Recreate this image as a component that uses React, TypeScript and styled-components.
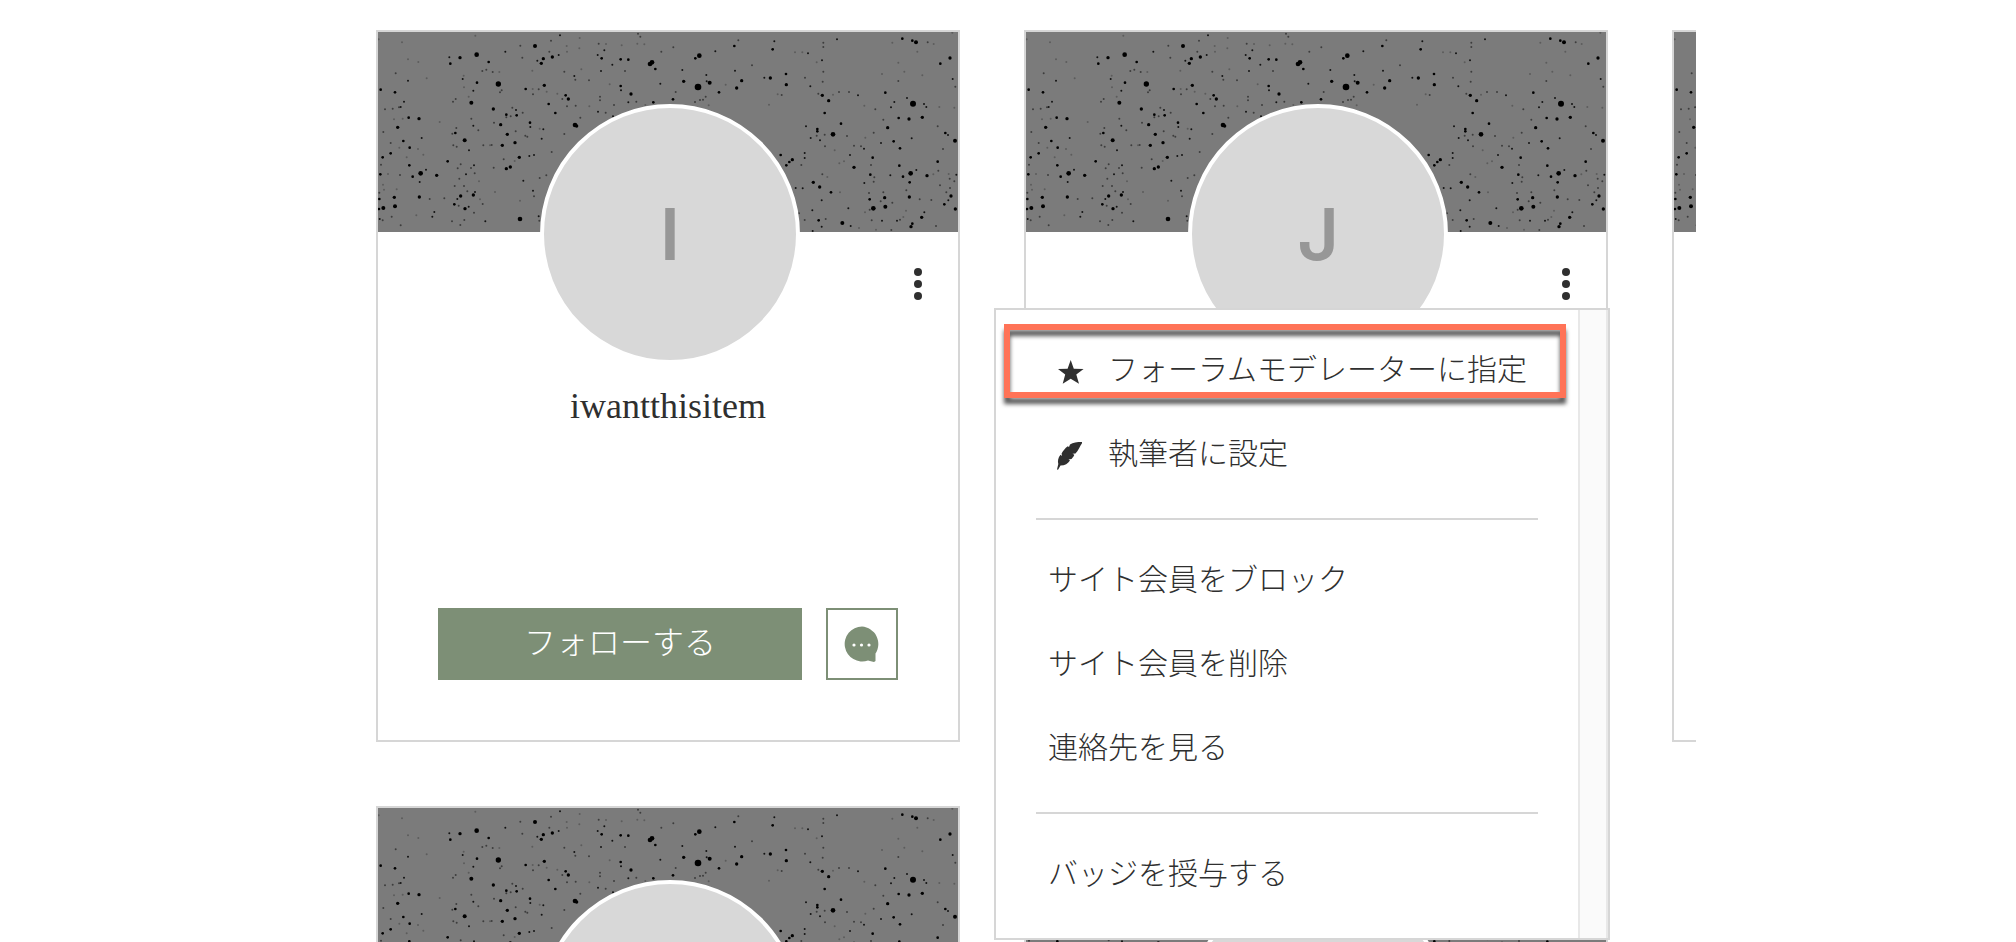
import React from "react";
import styled, { createGlobalStyle } from "styled-components";

const GlobalStyle = createGlobalStyle`
  * { box-sizing: border-box; }
  body {
    margin: 0;
    background: #ffffff;
    color: #2f2f2f;
    font-family: "Liberation Serif", "Noto Sans CJK JP", serif;
    overflow: hidden;
  }
`;

const line = "#d6d6d6";
const green = "#7d8f76";

const Page = styled.main`
  width: 100%;
  max-width: 1376px;
  height: 100vh;
  margin: 0 auto;
  padding: 30px 0 0 56px;
  overflow: hidden;
`;

const Grid = styled.ul`
  display: grid;
  grid-template-columns: repeat(3, 584px);
  grid-auto-rows: 712px;
  gap: 64px;
  margin: 0;
  padding: 0;
  list-style: none;
`;

const Card = styled.li`
  position: relative;
  display: flex;
  flex-direction: column;
  border: 2px solid ${line};
  background: #ffffff;
`;

const Cover = styled.div`
  position: relative;
  flex: none;
  height: 200px;
  padding: 72px 158px 0 162px;
  background: #7b7b7b;
`;

const Speckles = styled.svg`
  position: absolute;
  inset: 0;
  width: 100%;
  height: 100%;
`;

const Avatar = styled.div`
  position: relative;
  display: flex;
  align-items: center;
  justify-content: center;
  height: 260px;
  border: 4px solid #ffffff;
  border-radius: 50%;
  background: #d8d8d8;
  color: #979797;
  font: 600 72px/80px Inter, sans-serif;
`;

const CardBody = styled.div`
  flex: 1;
  display: flex;
  flex-direction: column;
  padding: 32px 32px 60px;
`;

const MoreButton = styled.button`
  align-self: flex-end;
  width: 16px;
  height: 40px;
  padding: 0;
  border: 0;
  background: none;
  color: inherit;
  svg { display: block; }
`;

const Name = styled.h2`
  margin: 80px 0 0;
  text-align: center;
  font-weight: 400;
  font-size: 36px;
  line-height: 44px;
`;

const Actions = styled.div`
  display: flex;
  gap: 24px;
  margin-top: auto;
  padding: 0 28px;
`;

const FollowButton = styled.button`
  flex: 1;
  height: 72px;
  padding: 0 0 8px;
  border: 0;
  background: ${green};
  color: #ffffff;
  font: 300 32px/40px "Noto Sans CJK JP", sans-serif;
`;

const MessageButton = styled.button`
  display: flex;
  align-items: center;
  justify-content: center;
  flex: 0 0 72px;
  height: 72px;
  padding: 0;
  border: 2px solid ${green};
  background: #ffffff;
  color: ${green};
`;

const Menu = styled.div`
  position: absolute;
  z-index: 2;
  top: 276px;
  left: -32px;
  display: flex;
  width: 616px;
  border: 2px solid ${line};
  background: #ffffff;
`;

const MenuList = styled.div`
  flex: 1;
  padding: 20px 40px;
`;

const ScrollTrack = styled.div`
  flex: 0 0 30px;
  border: solid #e8e8e8;
  border-width: 0 2px;
  background: #fafafa;
`;

const MenuItem = styled.button`
  display: flex;
  align-items: center;
  gap: 24px;
  width: 100%;
  height: 84px;
  padding: 0 0 10px 12px;
  border: 0;
  background: none;
  color: inherit;
  font: 300 30px/40px "Noto Sans CJK JP", sans-serif;
  white-space: nowrap;
  svg { flex: none; margin: 10px 0 0 8px; }
`;

const Separator = styled.hr`
  height: 2px;
  margin: 20px 0;
  border: 0;
  background: ${line};
`;

const Highlight = styled.div`
  position: absolute;
  top: 14px;
  left: 8px;
  width: 562px;
  height: 74px;
  border: 6px solid #ff7357;
  pointer-events: none;
  filter: drop-shadow(0 6px 2px rgba(0, 0, 0, 0.65));
`;

/* Speck centres and radii, in thirds of a pixel. */
const specksLeft = `320 104 7,495 78 6,270 113 5,241 131 4,238 112 3,356 126 4,406 95 3,570 46 3,547 111 5,520 116 5,514 130 5,502 122 3,566 105 3,538 95 2,543 62 2,686 71 2,683 105 3,695 115 4,703 91 3,752 118 4,775 119 4,727 134 3,846 127 7,840 132 7,856 147 4,871 191 3,874 95 2,804 41 2,811 50 2,850 247 4,783 222 5,752 198 4,693 153 3,765 153 2,613 168 3,657 181 2,616 179 2,587 226 4,595 237 5,536 252 4,556 279 4,523 196 5,467 207 4,385 192 8,321 188 4,278 177 3,310 212 3,304 248 6,349 149 2,368 156 2,337 153 2,281 167 1,114 182 3,114 118 1,77 160 2,170 175 1,96 67 1,316 47 1,145 126 1,32 209 4,75 217 4,102 245 3,92 261 3,87 262 2,68 266 2,116 293 4,147 296 5,83 322 5,40 336 2,62 369 2,100 363 4,119 383 4,155 354 3,62 400 4,38 412 4,33 434 2,31 463 4,118 436 4,90 465 2,152 460 7,128 470 4,168 449 3,149 486 3,200 466 5,233 424 4,256 339 4,284 361 6,310 317 3,304 296 2,325 331 2,370 267 5,409 284 4,440 286 4,438 270 3,392 314 5,412 343 5,435 368 5,397 376 5,448 412 5,478 408 3,492 405 3,421 441 5,409 446 5,480 308 4,481 321 3,520 328 3,515 356 3,615 315 7,620 318 5,631 293 2,684 275 3,707 278 2,729 289 3,775 247 3,799 245 2,372 308 2,340 376 2,365 375 2,360 376 1,297 391 3,312 436 3,263 445 2,288 463 3,314 460 2,303 444 2,268 476 2,460 482 3,489 512 3,509 474 2,529 466 2,492 529 2,450 597 7,346 604 3,310 525 5,272 528 5,253 553 4,262 537 3,285 566 5,296 560 3,266 557 2,338 552 2,315 516 3,193 576 3,187 590 3,179 537 2,223 535 2,148 531 5,73 532 5,75 559 6,40 564 6,28 537 4,27 567 4,29 597 3,38 601 2,65 590 2,139 586 1,92 616 2,506 589 3,508 602 2,246 604 2,271 615 2,283 600 2,312 578 2,254 498 2,282 498 2,292 514 2,80 508 1,39 494 1,28 518 2,42 509 1,88 383 1,144 387 1,45 268 2,72 298 1,98 296 1,249 245 2,257 237 2,296 230 1,282 202 1,390 217 2,395 211 2,388 156 1,451 77 2,457 113 2,487 152 1,488 207 1,489 223 2,506 208 2,530 215 1,562 221 1,577 237 2,591 259 2,617 257 2,583 155 2,590 78 1,591 95 1,629 54 1,628 85 1,634 148 1,708 72 1,755 76 1,802 71 1,823 73 1,719 193 1,753 211 3,690 230 2,690 241 2,732 255 2,658 259 1,826 255 1,427 263 2,458 278 2,422 289 2,409 292 2,437 334 2,466 347 2,472 350 2,509 326 1,583 342 2,545 396 2,371 443 2,401 418 2,434 423 1,327 484 1,272 433 2,260 380 2,250 376 2,259 324 2,247 341 2,209 306 1,160 404 1,26 58 1,110 412 1,54 462 1,330 538 1,375 516 1,450 542 1`;
const specksRight = `114 201 10,118 107 7,106 115 4,71 184 5,149 188 6,140 184 3,223 78 4,235 61 2,166 94 3,343 64 3,338 88 4,40 82 2,67 150 3,39 238 4,47 216 2,137 230 2,177 217 4,139 165 3,225 152 3,245 182 5,230 204 5,313 173 3,331 174 5,378 162 4,379 194 5,276 136 2,197 194 1,365 225 2,353 223 1,327 254 1,120 240 2,129 239 2,105 246 2,146 256 1,444 100 3,427 97 1,405 97 1,486 121 3,470 127 1,490 68 2,490 81 2,531 58 3,490 155 2,488 185 2,451 199 3,435 173 2,487 226 5,506 242 5,475 221 2,537 216 2,567 216 2,594 226 3,519 224 1,494 279 4,543 311 4,519 343 7,472 327 4,472 334 4,438 319 3,452 354 3,480 361 3,494 344 2,470 347 2,495 379 2,561 348 2,570 405 3,582 442 5,612 386 3,603 379 2,552 424 1,638 413 4,633 435 2,631 464 4,613 489 3,397 419 5,388 426 4,379 436 4,362 405 4,434 399 3,434 414 3,424 435 2,460 487 5,479 501 5,513 517 4,487 463 2,485 541 3,457 571 3,476 601 4,497 597 2,547 609 6,572 618 3,485 620 3,458 633 3,565 565 3,407 504 3,428 505 3,629 538 4,640 565 7,674 533 5,676 560 6,662 544 2,629 569 2,691 466 3,718 437 4,729 470 4,752 460 7,769 450 3,749 487 4,801 467 5,748 531 5,779 538 2,814 540 2,793 577 3,785 592 5,757 611 4,753 620 5,711 602 3,720 599 2,666 602 3,635 601 2,694 630 2,828 618 2,873 528 5,853 553 4,865 541 3,886 567 5,889 464 3,833 425 4,835 452 2,869 476 2,885 362 6,856 339 4,864 345 3,849 387 2,755 355 3,720 385 4,701 364 4,663 369 3,683 323 5,716 294 4,747 297 5,787 292 5,759 251 9,792 252 3,799 261 3,741 234 3,703 246 3,693 262 3,676 218 4,646 268 2,613 257 1,715 183 2,727 56 4,768 67 6,757 62 4,803 67 2,870 114 5,841 131 4,878 177 3,886 200 2,787 166 1,715 128 1,697 68 1,821 72 1,833 319 2,838 261 1,883 263 1,670 299 2,641 338 2,616 353 1,582 377 2,524 391 1,538 430 1,540 517 1,502 471 1,417 580 2,434 600 2,615 577 1,597 624 1,648 629 1,730 591 1,738 572 1,820 463 1,840 496 2,870 504 2,859 517 2,883 484 2,866 462 1,643 472 2,641 485 2,627 519 2,670 517 2,739 511 2,697 548 2,877 38 1,772 95 1,733 155 1,666 162 1`;

function parse(list: string, dx: number) {
  return list.split(",").map((s) => {
    const [x, y, r] = s.split(" ").map(Number);
    return { x: x + dx, y: y - 36, r };
  });
}

const specks = [...parse(specksLeft, -24), ...parse(specksRight, 846)];

function CoverArt() {
  return (
    <Speckles viewBox="0 0 1740 600" preserveAspectRatio="xMinYMin slice" aria-hidden="true">
      {specks.map((s, i) => (
        <circle key={i} cx={s.x} cy={s.y} r={s.r < 3 ? 3 : s.r} fill="#000" fillOpacity={s.r === 1 ? 0.25 : s.r === 2 ? 0.5 : s.r === 3 ? 0.85 : 1} />
      ))}
    </Speckles>
  );
}

function MoreIcon() {
  return (
    <svg width="16" height="40" viewBox="0 0 16 40" fill="currentColor" aria-hidden="true">
      <circle cx="8" cy="8" r="4" />
      <circle cx="8" cy="20" r="4" />
      <circle cx="8" cy="32" r="4" />
    </svg>
  );
}

function MessageIcon() {
  return (
    <svg width="36" height="36" viewBox="0 0 36 36" aria-hidden="true">
      <path fill="currentColor" d="M18 0.500a17.500 17.500 0 1 0 6 34L30 36l1.500-1V27.500A17.500 17.500 0 0 0 18 .5z" />
      <g fill="#fff">
        <circle cx="10" cy="19" r="1.600" />
        <circle cx="17.500" cy="19" r="1.600" />
        <circle cx="25" cy="19" r="1.600" />
      </g>
    </svg>
  );
}

function StarIcon() {
  return (
    <svg width="28" height="28" viewBox="0 0 28 28" fill="currentColor" aria-hidden="true">
      <path d="M14.700 2L17.800 10.800 27.600 11 20.300 16.500 23 25.700 14.700 20.800 6.700 25.700 9.200 16.500 2 11 11.600 10.800z" />
    </svg>
  );
}

function QuillIcon() {
  return (
    <svg width="28" height="28" viewBox="0 0 28 28" fill="currentColor" aria-hidden="true">
      <path d="M26 0C21 0 17 .2 14 2.600L13 5 11.800 4.200C9 6 7 9 5.600 11.500L6 14 4.500 12.800C2 16 1.500 19 2.300 22L1 27.500l1 .3L4.500 23.500C9 23.500 12 21.500 14 18.500L12.500 17.500 15.500 17C17 15.500 18 14 18.300 12.800L16.500 11.800 19.500 11.500C22.500 8.500 24 4 26 1.200z" />
    </svg>
  );
}

function MemberMenu() {
  return (
    <Menu>
      <MenuList>
        <MenuItem type="button"><StarIcon />フォーラムモデレーターに指定</MenuItem>
        <MenuItem type="button"><QuillIcon />執筆者に設定</MenuItem>
        <Separator />
        <MenuItem type="button">サイト会員をブロック</MenuItem>
        <MenuItem type="button">サイト会員を削除</MenuItem>
        <MenuItem type="button">連絡先を見る</MenuItem>
        <Separator />
        <MenuItem type="button">バッジを授与する</MenuItem>
      </MenuList>
      <ScrollTrack />
      <Highlight />
    </Menu>
  );
}

type MemberProps = { initial?: string; name?: string; menuOpen?: boolean };

function MemberCard({ initial, name, menuOpen }: MemberProps) {
  return (
    <Card>
      <Cover>
        <CoverArt />
        <Avatar>{initial}</Avatar>
      </Cover>
      <CardBody>
        <MoreButton type="button" aria-label="メニュー"><MoreIcon /></MoreButton>
        {name && <Name>{name}</Name>}
        {name && (
          <Actions>
            <FollowButton type="button">フォローする</FollowButton>
            <MessageButton type="button" aria-label="メッセージ"><MessageIcon /></MessageButton>
          </Actions>
        )}
      </CardBody>
      {menuOpen && <MemberMenu />}
    </Card>
  );
}

export default function App() {
  return (
    <>
      <GlobalStyle />
      <Page>
        <Grid>
          <MemberCard initial="I" name="iwantthisitem" />
          <MemberCard initial="J" menuOpen />
          <MemberCard />
          <MemberCard />
          <MemberCard />
        </Grid>
      </Page>
    </>
  );
}
